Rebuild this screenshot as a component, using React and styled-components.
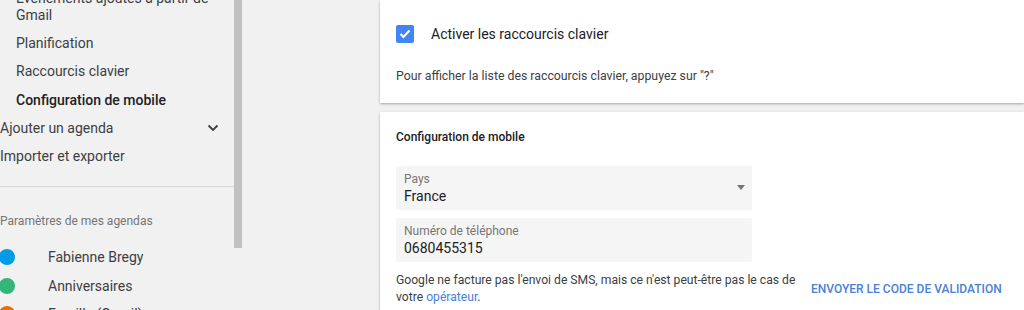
import React from 'react';
import styled, { createGlobalStyle } from 'styled-components';

const GlobalStyle = createGlobalStyle`
  html, body {
    margin: 0;
    padding: 0;
    background: #f1f1f1;
    font-family: Roboto, "Liberation Sans", Arial, sans-serif;
    color: #202124;
    overflow: hidden;
  }
`;

const Page = styled.div`
  display: flex;
  height: 310px;
  overflow: hidden;
`;

const SideWrap = styled.div`
  display: flex;
  flex: 0 0 242px;
`;

const Sidebar = styled.div`
  width: 234px;
  overflow: hidden;
`;

const NavList = styled.div`
  margin-top: -16px;
  display: flex;
  flex-direction: column;
`;

const NavItem = styled.div`
  display: flex;
  align-items: center;
  justify-content: space-between;
  padding: 5.67px 0 5.67px ${p => (p.$sub ? '16px' : '0')};
  font-size: 14px;
  line-height: 17px;
  font-weight: ${p => (p.$active ? 500 : 400)};
  color: ${p => (p.$active ? '#202124' : '#3c4043')};
`;

const Chevron = styled.svg`
  width: 12px;
  height: 8px;
  margin-right: 15px;
`;

const Divider = styled.div`
  height: 1px;
  background: #d9d9d9;
  margin-top: 15px;
`;

const GroupLabel = styled.div`
  margin-top: 26px;
  font-size: 12px;
  line-height: 16px;
  color: #757575;
`;

const CalList = styled.div`
  margin-top: 14px;
  display: flex;
  flex-direction: column;
`;

const CalRow = styled.div`
  display: flex;
  align-items: center;
  height: 28.5px;
  font-size: 14px;
  color: #3c4043;
`;

const Dot = styled.span`
  flex: 0 0 16px;
  height: 16px;
  border-radius: 50%;
  margin-left: -1px;
  margin-right: 33px;
  background: ${p => p.$color};
`;

const ScrollTrack = styled.div`
  width: 8px;
`;

const ScrollThumb = styled.div`
  height: 248px;
  background: #c1c1c1;
`;

const Main = styled.div`
  flex: 1;
  margin-left: 138px;
  display: flex;
  flex-direction: column;
  gap: 9px;
`;

const Card = styled.div`
  background: #fff;
  box-shadow: 0 1px 2px rgba(0, 0, 0, 0.25), 0 1px 4px rgba(0, 0, 0, 0.08);
  padding: ${p => p.$pad};
`;

const CheckRow = styled.label`
  display: flex;
  align-items: center;
  gap: 17px;
  font-size: 14px;
  line-height: 20px;
  color: #202124;
`;

const CheckBox = styled.span`
  width: 18px;
  height: 18px;
  border-radius: 2px;
  background: #4285f4;
  display: flex;
  align-items: center;
  justify-content: center;
`;

const Hint = styled.p`
  margin: 24px 0 0;
  font-size: 12.3px;
  line-height: 16px;
  color: #3c4043;
`;

const SectionTitle = styled.h3`
  margin: 0;
  font-size: 12px;
  line-height: 16px;
  font-weight: 500;
  color: #202124;
`;

const Fields = styled.div`
  margin-top: 21px;
  display: flex;
  flex-direction: column;
  gap: 8px;
  width: 356px;
`;

const Field = styled.div`
  position: relative;
  height: 44px;
  box-sizing: border-box;
  padding: 5px 8px;
  background: #f5f5f5;
  border-radius: 2px;
`;

const FieldLabel = styled.div`
  font-size: 12px;
  line-height: 16px;
  color: #757575;
`;

const FieldValue = styled.div`
  font-size: 14px;
  line-height: 18px;
  color: #202124;
`;

const Caret = styled.span`
  position: absolute;
  right: 7px;
  top: 19px;
  width: 0;
  height: 0;
  border-left: 4px solid transparent;
  border-right: 4px solid transparent;
  border-top: 5px solid #757575;
`;

const Footer = styled.div`
  margin-top: 10px;
  display: flex;
  align-items: center;
  gap: 3px;
`;

const Note = styled.p`
  margin: 0;
  width: 408px;
  font-size: 12.15px;
  line-height: 17px;
  color: #3c4043;
`;

const Link = styled.a`
  color: #4a80d6;
  text-decoration: none;
`;

const TextButton = styled.button`
  border: 0;
  background: none;
  padding: 6px 4px;
  font-family: inherit;
  font-size: 12px;
  font-weight: 500;
  color: #4a80d6;
  text-transform: uppercase;
  white-space: nowrap;
  cursor: pointer;
`;

const navItems = [
  { label: 'Événements ajoutés à partir de Gmail', sub: true },
  { label: 'Planification', sub: true },
  { label: 'Raccourcis clavier', sub: true },
  { label: 'Configuration de mobile', sub: true, active: true },
  { label: 'Ajouter un agenda', chevron: true },
  { label: 'Importer et exporter' }
];

const calendars = [
  { name: 'Fabienne Bregy', color: '#039be5' },
  { name: 'Anniversaires', color: '#33b679' },
  { name: 'Famille (Gmail)', color: '#ef6c00' }
];

const App = () => {
  return (
    <>
      <GlobalStyle />
      <Page>
        <SideWrap>
          <Sidebar>
            <NavList>
              {navItems.map(item => (
                <NavItem key={item.label} $sub={item.sub} $active={item.active}>
                  <span>{item.label}</span>
                  {item.chevron && (
                    <Chevron viewBox="0 0 12 8">
                      <path d="M1.5 1.5l4.5 4.5 4.5-4.5" fill="none" stroke="#3c4043" strokeWidth="1.8" />
                    </Chevron>
                  )}
                </NavItem>
              ))}
            </NavList>
            <Divider />
            <GroupLabel>Paramètres de mes agendas</GroupLabel>
            <CalList>
              {calendars.map(cal => (
                <CalRow key={cal.name}>
                  <Dot $color={cal.color} />
                  {cal.name}
                </CalRow>
              ))}
            </CalList>
          </Sidebar>
          <ScrollTrack>
            <ScrollThumb />
          </ScrollTrack>
        </SideWrap>

        <Main>
          {/* raccourcis */}
          <Card $pad="24px 16px 19px">
            <CheckRow>
              <CheckBox>
                <svg width="12" height="10" viewBox="0 0 12 10">
                  <path d="M1.5 5l3 3 6-6.5" fill="none" stroke="#fff" strokeWidth="2" />
                </svg>
              </CheckBox>
              Activer les raccourcis clavier
            </CheckRow>
            <Hint>Pour afficher la liste des raccourcis clavier, appuyez sur "?"</Hint>
          </Card>

          {/* mobile */}
          <Card $pad="17px 16px 20px">
            <SectionTitle>Configuration de mobile</SectionTitle>
            <Fields>
              <Field>
                <FieldLabel>Pays</FieldLabel>
                <FieldValue>France</FieldValue>
                <Caret />
              </Field>
              <Field>
                <FieldLabel>Numéro de téléphone</FieldLabel>
                <FieldValue>0680455315</FieldValue>
              </Field>
            </Fields>
            <Footer>
              <Note>
                Google ne facture pas l'envoi de SMS, mais ce n'est peut-être pas le cas de votre{' '}
                <Link href="#">opérateur</Link>.
              </Note>
              <TextButton>Envoyer le code de validation</TextButton>
            </Footer>
          </Card>
        </Main>
      </Page>
    </>
  );
};

export default App;
